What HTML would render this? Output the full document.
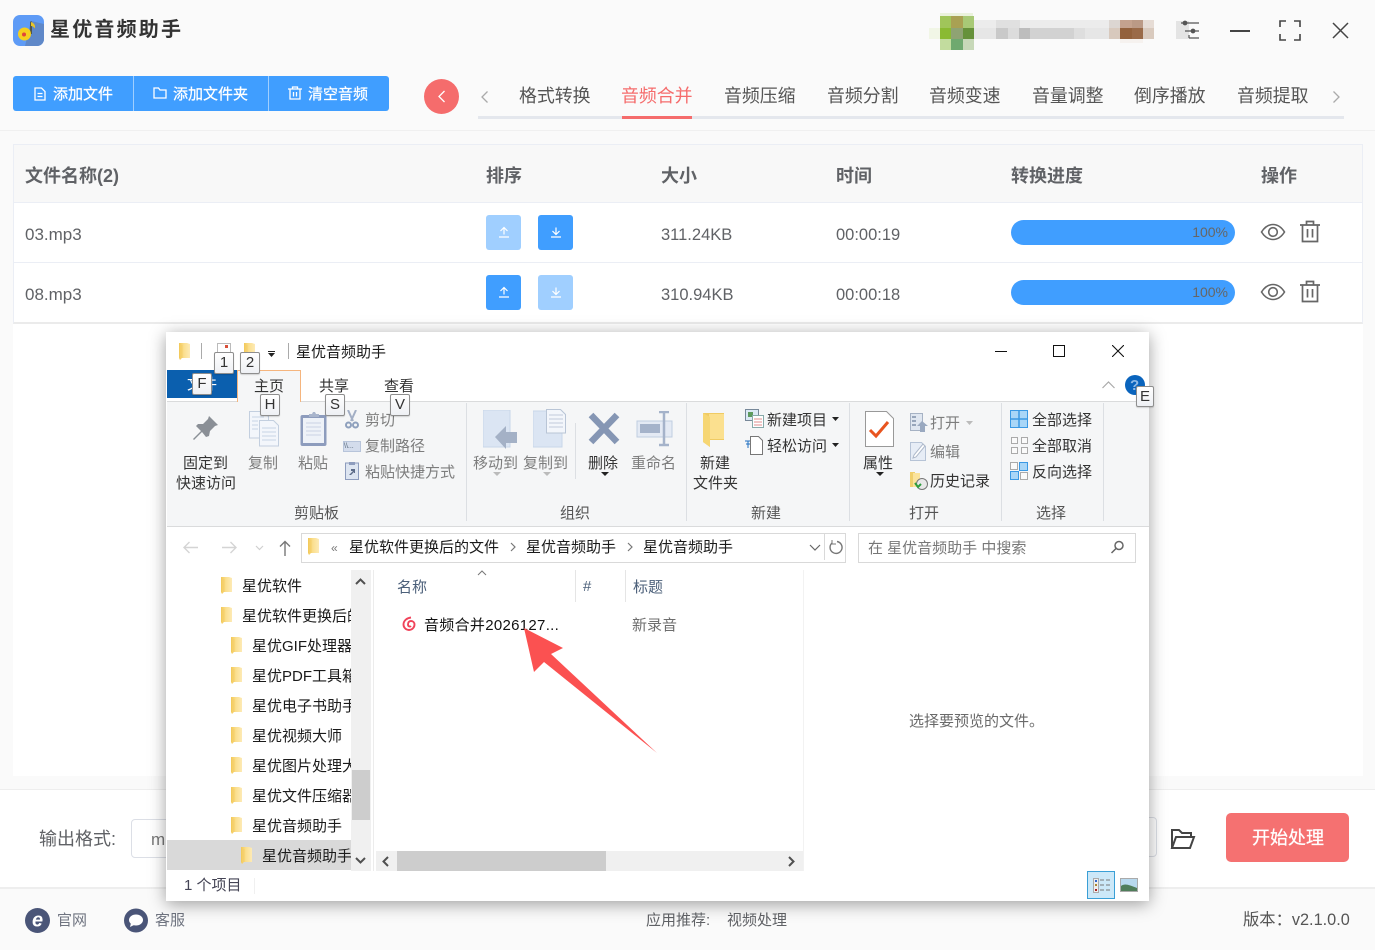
<!DOCTYPE html>
<html lang="zh"><head><meta charset="utf-8"><title>星优音频助手</title>
<style>
html,body{margin:0;padding:0;width:1375px;height:950px;overflow:hidden;background:#fafafa}
body{position:relative;font-family:"Liberation Sans","Noto Sans CJK SC",sans-serif;color:#606266}
.a{position:absolute}
.t{position:absolute;white-space:nowrap;line-height:20px}
.tab{font-size:17.900px;top:86px;color:#555;line-height:20px}
.th{font-size:18px;font-weight:700;top:166px;color:#606266}
.td{font-size:16.500px;color:#606266;margin-top:1px}
.w{-webkit-text-stroke:.25px #fff}
.btn{position:absolute;width:35px;height:35px;border-radius:3px;background:#409eff}
.btn.off{background:#a0cfff}
.bar{position:absolute;left:1011px;width:224px;height:25px;border-radius:13px;background:#409eff;color:#666;font-size:14px;line-height:25px;text-align:right}
.bar span{padding-right:7px}
.e{font-size:15px;color:#333;margin-top:1px}
.g{color:#7d7d7d}
.k{position:absolute;width:18px;height:20px;border:1px solid #8e8e8e;background:linear-gradient(#fff,#eef0f4);border-radius:2px;font-size:15px;line-height:20px;text-align:center;color:#333;z-index:5;box-shadow:0 1px 1px rgba(0,0,0,.15)}
.sep{position:absolute;width:1px;background:#dcdfe3}
.ng{font-size:15px;color:#555;top:504px}
.nav{font-size:15px;color:#1a1a1a;margin-top:1px}
.cl{overflow:hidden}
.fol{position:absolute;width:13px;height:17px}
</style></head><body>
<svg width="0" height="0" style="position:absolute"><defs>
<linearGradient id="fg" x1="0" x2="1" y1="0" y2="0"><stop offset="0" stop-color="#f2c857"/><stop offset=".45" stop-color="#fbdf8f"/><stop offset="1" stop-color="#fdeab5"/></linearGradient>
<symbol id="fo" viewBox="0 0 13 17"><path d="M1 0h8l3 1v14H4l-2 2-1-2z" fill="url(#fg)"/><path d="M4 2v13" stroke="#f0c452" stroke-width=".6" opacity=".6"/></symbol>
<symbol id="eye" viewBox="0 0 26 18"><path d="M1.500 9C5 3.500 9 1.500 13 1.500S21 3.500 24.500 9C21 14.500 17 16.500 13 16.500S5 14.500 1.500 9z" fill="none" stroke="#666" stroke-width="1.600"/><circle cx="13" cy="9" r="4.300" fill="none" stroke="#666" stroke-width="1.600"/></symbol>
<symbol id="del" viewBox="0 0 22 23"><path d="M1 5h20M7.500 5V1.500h7V5M3.500 5v16.500h15V5M8.500 9v8.500M13.500 9v8.500" fill="none" stroke="#666" stroke-width="1.700"/></symbol>
<symbol id="up" viewBox="0 0 12 12"><path d="M1 11h10M6 8.500V2M2.500 5L6 1.500 9.500 5" fill="none" stroke="#fff" stroke-width="1.200"/></symbol>
<symbol id="dn" viewBox="0 0 12 12"><path d="M1 11h10M6 1.500V8M2.500 5L6 8.500 9.500 5" fill="none" stroke="#fff" stroke-width="1.200"/></symbol>
</defs></svg>

<!-- header -->
<div class="a" style="left:0;top:130px;width:1375px;height:1px;background:#f0f0f0"></div>
<svg class="a" style="left:13px;top:15px" width="31" height="31" viewBox="0 0 31 31"><rect width="31" height="31" rx="7" fill="#5e9bf6"/><path d="M18 6l13 3v15a7 7 0 0 1-7 7H12z" fill="#5f88c8"/><path d="M18 6.500V19" stroke="#4a4a30" stroke-width="1.600"/><path d="M18 7c3 1 4.500 3 4 6.500-1-1.500-2.500-2.500-4-2.500z" fill="#e8c527"/><circle cx="11.500" cy="19" r="6.500" fill="#f5cf1e"/><circle cx="11" cy="19.500" r="2" fill="#e0453a"/></svg>
<div class="t" style="left:50px;top:20px;font-size:20px;font-weight:700;color:#333;letter-spacing:2.200px">星优音频助手</div>

<!-- blurred avatar -->
<svg class="a" style="left:929px;top:13px" width="226" height="38" shape-rendering="crispEdges">
<rect x="11" y="0" width="33" height="3" fill="#eaf2dc"/>
<rect x="11" y="3" width="11" height="12" fill="#a0c55a"/><rect x="22" y="3" width="12" height="12" fill="#a9a153"/><rect x="34" y="3" width="11" height="12" fill="#a8c976"/>
<rect x="0" y="15" width="11" height="11" fill="#f1f6e6"/><rect x="11" y="15" width="11" height="11" fill="#8aba32"/><rect x="22" y="15" width="12" height="11" fill="#8fa373"/><rect x="34" y="15" width="11" height="11" fill="#66913a"/>
<rect x="11" y="26" width="11" height="11" fill="#c2dc9e"/><rect x="22" y="26" width="12" height="11" fill="#6fa96f"/><rect x="34" y="26" width="11" height="11" fill="#c7d8b8"/>
<rect x="45" y="7" width="180" height="8" fill="#ececec"/><rect x="45" y="15" width="180" height="11" fill="#e6e6e6"/>
<rect x="67" y="15" width="12" height="11" fill="#c9c9c9"/><rect x="79" y="15" width="11" height="11" fill="#dcdcdc"/><rect x="90" y="15" width="11" height="11" fill="#bdbdbd"/><rect x="101" y="15" width="44" height="11" fill="#d2d2d2"/>
<rect x="145" y="15" width="11" height="11" fill="#dedede"/><rect x="67" y="7" width="24" height="8" fill="#e0e0e0"/><rect x="180" y="7" width="11" height="8" fill="#dcd6d2"/><rect x="180" y="15" width="11" height="11" fill="#d8c9bd"/>
<rect x="191" y="7" width="12" height="8" fill="#c4a28e"/><rect x="203" y="7" width="11" height="8" fill="#bb9a86"/><rect x="191" y="15" width="12" height="11" fill="#93613c"/><rect x="203" y="15" width="11" height="11" fill="#9a6a48"/><rect x="214" y="7" width="11" height="8" fill="#e6dcd5"/><rect x="214" y="15" width="11" height="11" fill="#d9cabe"/>
<rect x="191" y="26" width="23" height="4" fill="#f6f2ef"/>
</svg>
<div class="a" style="left:1176px;top:21px;width:13px;height:18px;background:#e4e4e4"></div>
<svg class="a" style="left:1180px;top:20px" width="20" height="20" fill="none" stroke="#555" stroke-width="1.200"><path d="M1 3h18M5 11h14M9 18h10M9 15v3"/><circle cx="5" cy="3" r="1.800" fill="#555"/><circle cx="13" cy="11" r="1.800" fill="#555"/></svg>
<div class="a" style="left:1230px;top:30px;width:20px;height:1.500px;background:#444"></div>
<svg class="a" style="left:1279px;top:20px" width="22" height="21" fill="none" stroke="#444" stroke-width="1.600"><path d="M7 1H1v6M15 1h6v6M1 14v6h6M21 14v6h-6"/></svg>
<svg class="a" style="left:1332px;top:22px" width="17" height="17" fill="none" stroke="#444" stroke-width="1.500"><path d="M1 1l15 15M16 1L1 16"/></svg>

<!-- toolbar -->
<div class="a" style="left:13px;top:76px;width:376px;height:35px;background:#409eff;border-radius:3px"></div>
<div class="a" style="left:133px;top:76px;width:1px;height:35px;background:#a0cfff"></div>
<div class="a" style="left:268px;top:76px;width:1px;height:35px;background:#a0cfff"></div>
<svg class="a" style="left:34px;top:87px" width="12" height="14" fill="none" stroke="#fff" stroke-width="1.300"><path d="M1 1h6.500L11 4.500V13H1zM3.500 6.500h5M3.500 9.500h5"/></svg>
<div class="t w" style="left:53px;top:85px;font-size:15px;color:#fff">添加文件</div>
<svg class="a" style="left:153px;top:87px" width="14" height="12" fill="none" stroke="#fff" stroke-width="1.300"><path d="M1 1h4.500l1.500 2h6v8H1z"/></svg>
<div class="t w" style="left:173px;top:85px;font-size:15px;color:#fff">添加文件夹</div>
<svg class="a" style="left:288px;top:86px" width="14" height="14" fill="none" stroke="#fff" stroke-width="1.300"><path d="M0 3h14M4.500 3V1h5v2M2 3v10h10V3M5.500 6v4.500M8.500 6v4.500"/></svg>
<div class="t w" style="left:308px;top:85px;font-size:15px;color:#fff">清空音频</div>

<!-- tabs -->
<div class="a" style="left:424px;top:79px;width:35px;height:35px;border-radius:50%;background:#f56c6c"></div>
<svg class="a" style="left:437px;top:90px" width="9" height="13" fill="none" stroke="#fff" stroke-width="1.300"><path d="M7.500 1L2 6.500 7.500 12"/></svg>
<svg class="a" style="left:480px;top:90px" width="9" height="14" fill="none" stroke="#aaa" stroke-width="1.300"><path d="M7.500 1.500L2 7l5.500 5.500"/></svg>
<div class="a" style="left:478px;top:116px;width:866px;height:3px;background:#e4e7ed"></div>
<div class="a" style="left:622px;top:116px;width:70px;height:3px;background:#f56c6c"></div>
<div class="t tab" style="left:519px">格式转换</div>
<div class="t tab" style="left:621px;color:#f56c6c">音频合并</div>
<div class="t tab" style="left:724px">音频压缩</div>
<div class="t tab" style="left:827px">音频分割</div>
<div class="t tab" style="left:929px">音频变速</div>
<div class="t tab" style="left:1032px">音量调整</div>
<div class="t tab" style="left:1134px">倒序播放</div>
<div class="t tab" style="left:1237px">音频提取</div>
<svg class="a" style="left:1332px;top:90px" width="9" height="14" fill="none" stroke="#aaa" stroke-width="1.300"><path d="M1.500 1.500L7 7l-5.500 5.500"/></svg>

<!-- table -->
<div class="a" style="left:13px;top:144px;width:1350px;height:632px;background:#fff"></div>
<div class="a" style="left:13px;top:144px;width:1348px;height:177px;border:1px solid #ebeef5;border-bottom:2px solid #ebebeb"></div>
<div class="a" style="left:14px;top:145px;width:1348px;height:57px;background:#f8f8f8"></div>
<div class="a" style="left:14px;top:202px;width:1348px;height:1px;background:#ebeef5"></div>
<div class="a" style="left:14px;top:262px;width:1348px;height:1px;background:#ebeef5"></div>
<div class="t th" style="left:25px">文件名称(2)</div>
<div class="t th" style="left:486px">排序</div>
<div class="t th" style="left:661px">大小</div>
<div class="t th" style="left:836px">时间</div>
<div class="t th" style="left:1011px">转换进度</div>
<div class="t th" style="left:1261px">操作</div>

<div class="t td" style="left:25px;top:224px;font-size:17px">03.mp3</div>
<div class="btn off" style="left:486px;top:215px"><svg class="a" style="left:12px;top:11px" width="12" height="12"><use href="#up"/></svg></div>
<div class="btn" style="left:538px;top:215px"><svg class="a" style="left:12px;top:11px" width="12" height="12"><use href="#dn"/></svg></div>
<div class="t td" style="left:661px;top:224px">311.24KB</div>
<div class="t td" style="left:836px;top:224px">00:00:19</div>
<div class="bar" style="top:220px"><span>100%</span></div>
<svg class="a" style="left:1260px;top:223px" width="26" height="18"><use href="#eye"/></svg>
<svg class="a" style="left:1299px;top:220px" width="22" height="23"><use href="#del"/></svg>

<div class="t td" style="left:25px;top:284px;font-size:17px">08.mp3</div>
<div class="btn" style="left:486px;top:275px"><svg class="a" style="left:12px;top:11px" width="12" height="12"><use href="#up"/></svg></div>
<div class="btn off" style="left:538px;top:275px"><svg class="a" style="left:12px;top:11px" width="12" height="12"><use href="#dn"/></svg></div>
<div class="t td" style="left:661px;top:284px">310.94KB</div>
<div class="t td" style="left:836px;top:284px">00:00:18</div>
<div class="bar" style="top:280px"><span>100%</span></div>
<svg class="a" style="left:1260px;top:283px" width="26" height="18"><use href="#eye"/></svg>
<svg class="a" style="left:1299px;top:280px" width="22" height="23"><use href="#del"/></svg>

<!-- bottom panel -->
<div class="a" style="left:0;top:789px;width:1375px;height:100px;background:#fff;border-top:1px solid #eee;border-bottom:2px solid #eee;box-sizing:border-box"></div>
<div class="t" style="left:39px;top:829px;font-size:18px;color:#606266">输出格式:</div>
<div class="a" style="left:131px;top:819px;width:60px;height:37px;border:1px solid #dcdfe6;border-radius:4px;background:#fff"></div>
<div class="t" style="left:151px;top:830px;font-size:17px;color:#777">mp3</div>
<div class="a" style="left:1100px;top:817px;width:55px;height:38px;border:1px solid #dcdfe6;border-radius:4px;background:#fff"></div>
<svg class="a" style="left:1170px;top:827px" width="26" height="23" fill="none" stroke="#444" stroke-width="2"><path d="M2 21V3h7l3 3h9v4M2 21l4-11h18l-4 11z"/></svg>
<div class="a" style="left:1226px;top:813px;width:123px;height:49px;background:#f56c6c;opacity:.97;border-radius:5px"></div>
<div class="t w" style="left:1252px;top:828px;font-size:18px;color:#fff">开始处理</div>

<!-- footer -->
<svg class="a" style="left:25px;top:908px" width="25" height="25"><circle cx="12.500" cy="12.500" r="12.500" fill="#4a5578"/><text x="12.500" y="18.500" font-family="Liberation Sans" font-size="20" font-weight="700" font-style="italic" text-anchor="middle" fill="#fff">e</text></svg>
<div class="t" style="left:57px;top:911px;font-size:15px;color:#6f7480">官网</div>
<svg class="a" style="left:124px;top:908px" width="24" height="25"><circle cx="12" cy="12.500" r="12" fill="#4a5578"/><ellipse cx="12" cy="12" rx="7" ry="5.500" fill="#fff"/><path d="M7 15l-1 4 5-2.500z" fill="#fff"/></svg>
<div class="t" style="left:155px;top:911px;font-size:15px;color:#6f7480">客服</div>
<div class="t" style="left:646px;top:911px;font-size:15px;color:#606266">应用推荐:</div>
<div class="t" style="left:727px;top:911px;font-size:15px;color:#606266">视频处理</div>
<div class="t" style="left:1243px;top:910px;font-size:16.300px;color:#555;margin-top:0">版本：v2.1.0.0</div>

<!-- explorer window -->
<div class="a" style="left:166px;top:332px;width:983px;height:569px;background:#fff;box-shadow:0 3px 16px rgba(0,0,0,.38);z-index:2" id="w">
<div style="position:absolute;left:-166px;top:-332px;width:1375px;height:950px">
<svg class="fol" style="left:178px;top:343px"><use href="#fo"/></svg>
<div class="a" style="left:201px;top:343px;width:1px;height:16px;background:#aaa"></div>
<div class="a" style="left:217px;top:343px;width:14px;height:16px;background:#fff;border:1px solid #bbb;box-sizing:border-box"></div>
<div class="a" style="left:225px;top:345px;width:3px;height:3px;background:#d9503a"></div>
<svg class="fol" style="left:243px;top:343px"><use href="#fo"/></svg>
<svg class="a" style="left:268px;top:351px" width="8" height="6"><path d="M0 2h7L3.500 6zM0 0h7v1H0z" fill="#222"/></svg>
<div class="a" style="left:288px;top:343px;width:1px;height:16px;background:#aaa"></div>
<div class="t" style="left:296px;top:343px;font-size:15px;color:#1a1a1a">星优音频助手</div>
<div class="a" style="left:995px;top:351px;width:12px;height:1px;background:#111"></div>
<div class="a" style="left:1053px;top:345px;width:10px;height:10px;border:1.500px solid #111"></div>
<svg class="a" style="left:1112px;top:345px" width="12" height="12" fill="none" stroke="#111" stroke-width="1.100"><path d="M0 0l12 12M12 0L0 12"/></svg>

<div class="k" style="left:214px;top:352px">1</div>
<div class="k" style="left:240px;top:352px">2</div>

<div class="a" style="left:167px;top:370px;width:70px;height:28px;background:#0b5fae"></div>
<div class="t" style="left:187px;top:375px;font-size:15px;color:#fff">文件</div>
<div class="k" style="left:192px;top:373px">F</div>
<div class="a" style="left:167px;top:401px;width:982px;background:#f5f6f7;border-top:1px solid #dadbdc;border-bottom:1px solid #dadbdc;box-sizing:border-box;height:126px"></div>
<div class="a" style="left:237px;top:370px;width:64px;height:32px;background:#f5f6f7;border:1px solid #f5b57e;border-bottom:none;box-sizing:border-box"></div>
<div class="t e" style="left:254px;top:376px">主页</div>
<div class="t e" style="left:319px;top:376px">共享</div>
<div class="t e" style="left:384px;top:376px">查看</div>
<div class="k" style="left:260px;top:394px">H</div>
<div class="k" style="left:325px;top:394px">S</div>
<div class="k" style="left:390px;top:394px">V</div>
<svg class="a" style="left:1102px;top:381px" width="13" height="8" fill="none" stroke="#aaa" stroke-width="1.200"><path d="M0.500 7L6.500 1l6 6"/></svg>
<div class="a" style="left:1125px;top:375px;width:20px;height:20px;border-radius:50%;background:#0a64bd"></div>
<div class="t" style="left:1130px;top:376px;font-size:15px;font-weight:700;color:#8fb9e6">?</div>
<div class="k" style="left:1136px;top:386px;width:16px;height:19px;line-height:19px">E</div>

<!-- ribbon separators -->
<div class="sep" style="left:466px;top:403px;height:118px"></div>
<div class="sep" style="left:686px;top:403px;height:118px"></div>
<div class="sep" style="left:849px;top:403px;height:118px"></div>
<div class="sep" style="left:1001px;top:403px;height:118px"></div>
<div class="sep" style="left:1103px;top:403px;height:118px"></div>
<div class="sep" style="left:575px;top:423px;height:56px"></div>

<!-- clipboard -->
<svg class="a" style="left:192px;top:415px" width="28" height="28"><path d="M17 1l9 9-3 1-5 5-1 5-3 1-4-5-8 8-1-1 8-8-5-5 2-2 5 0 5-5z" fill="#8a8f96"/></svg>
<div class="t e" style="left:183px;top:453px">固定到</div>
<div class="t e" style="left:176px;top:473px">快速访问</div>
<svg class="a" style="left:248px;top:411px" width="32" height="36" fill="#f3f6fb" stroke="#c3cfdf"><path d="M1.500.5h14l5 5V27H1.500z"/><path d="M11.500 9.500h14l5 5V35H11.500z"/><path d="M4 6h12M4 10h6M4 14h6M4 18h6M14 17h14M14 21h14M14 25h14M14 29h14" stroke="#c7d4e5"/></svg>
<div class="t e g" style="left:248px;top:453px">复制</div>
<svg class="a" style="left:300px;top:411px" width="28" height="36"><rect x="0.500" y="4" width="26" height="31" rx="2" fill="#8d9cbd"/><rect x="3" y="7" width="21" height="25" fill="#eef2f8"/><path d="M6 12h15M6 16h15M6 20h15M6 24h15" stroke="#c9d3e4"/><path d="M9 6V3h3l1-2h2l1 2h3v3z" fill="#a9b5cc"/></svg>
<div class="t e g" style="left:298px;top:453px">粘贴</div>
<svg class="a" style="left:345px;top:410px" width="14" height="19" fill="none" stroke="#a3afc5" stroke-width="2"><path d="M3 0l5 11M11 0L6 11"/><circle cx="3.500" cy="15" r="2.500" stroke="#8ea0bd"/><circle cx="10.500" cy="15" r="2.500" stroke="#8ea0bd"/></svg>
<div class="t e g" style="left:365px;top:410px">剪切</div>
<div class="a" style="left:343px;top:441px;width:16px;height:9px;background:#d3dcec;border:1px solid #b7c4da;font-size:7px;line-height:9px;color:#567;overflow:hidden">\\...</div>
<div class="t e g" style="left:365px;top:436px">复制路径</div>
<svg class="a" style="left:345px;top:461px" width="14" height="19"><rect x="0.500" y="2" width="13" height="16.500" fill="#dde5f1" stroke="#8d9cbd"/><path d="M4 1h6v3H4z" fill="#8d9cbd"/><path d="M4 14l4-4H6V8h4v4H9V11l-3 3z" fill="#5c6b88"/></svg>
<div class="t e g" style="left:365px;top:462px">粘贴快捷方式</div>
<div class="t ng" style="left:294px">剪贴板</div>

<!-- organize -->
<svg class="a" style="left:483px;top:410px" width="34" height="39"><rect width="27" height="37" fill="#dbe5f3" stroke="#c8d6e8"/><path d="M12 29l11-11v6h11v11H23v6z" fill="#a4b1c6" transform="translate(0,-2)"/></svg>
<div class="t e g" style="left:473px;top:453px">移动到</div>
<svg class="a" style="left:533px;top:409px" width="34" height="39"><rect y="2" width="29" height="36" fill="#dbe5f3" stroke="#c8d6e8"/><path d="M13.500.5h14l5 5V24h-19z" fill="#f3f6fb" stroke="#b9c5d6"/><path d="M16 6h14M16 10h14M16 14h14M16 18h14" stroke="#c0cbdb"/></svg>
<div class="t e g" style="left:523px;top:453px">复制到</div>
<svg class="a" style="left:493px;top:472px" width="8" height="5"><path d="M0 0h8L4 4z" fill="#bbb"/></svg>
<svg class="a" style="left:543px;top:472px" width="8" height="5"><path d="M0 0h8L4 4z" fill="#bbb"/></svg>
<svg class="a" style="left:588px;top:412px" width="32" height="33"><path d="M3 3l26 27M29 3L3 30" stroke="#8596b4" stroke-width="6.500"/></svg>
<div class="t e" style="left:588px;top:453px">删除</div>
<svg class="a" style="left:601px;top:472px" width="8" height="5"><path d="M0 0h8L4 4z" fill="#222"/></svg>
<svg class="a" style="left:636px;top:411px" width="37" height="36"><rect x="1" y="10" width="35" height="16" fill="#e4eaf4" stroke="#c0cde0"/><rect x="4" y="13" width="20" height="9" fill="#a5b3ca"/><path d="M28 1v33M23 1h10M23 34h10" stroke="#a5b3ca" stroke-width="2.500"/></svg>
<div class="t e g" style="left:631px;top:453px">重命名</div>
<div class="t ng" style="left:560px">组织</div>

<!-- new -->
<svg class="a" style="left:702px;top:412px" width="25" height="36"><path d="M1 1h21v27H8v7L1 30z" fill="#f0cb63"/><path d="M7 2h15v25H8z" fill="#fbe08f"/><path d="M1 1l7 4v30l-7-5z" fill="#f6d673"/></svg>
<div class="t e" style="left:700px;top:453px">新建</div>
<div class="t e" style="left:693px;top:473px">文件夹</div>
<svg class="a" style="left:745px;top:409px" width="19" height="19"><rect x="0.500" y="0.500" width="13" height="11" fill="#dbe9f5" stroke="#789"/><rect x="3" y="3" width="5" height="5" fill="#5d9a5e"/><rect x="7.500" y="6.500" width="11" height="12" fill="#fff" stroke="#8aa"/><path d="M9 10h8M9 13h8M9 16h8" stroke="#e28c8c"/></svg>
<div class="t e" style="left:767px;top:410px">新建项目</div>
<svg class="a" style="left:832px;top:417px" width="7" height="4"><path d="M0 0h7L3.500 4z" fill="#222"/></svg>
<svg class="a" style="left:745px;top:436px" width="18" height="19" fill="none"><path d="M5.500.5h8l4 4V18.500h-12z" fill="#fff" stroke="#777"/><path d="M0 5h5M1 8h4M3 5v7" stroke="#1f6fc0"/></svg>
<div class="t e" style="left:767px;top:436px">轻松访问</div>
<svg class="a" style="left:832px;top:443px" width="7" height="4"><path d="M0 0h7L3.500 4z" fill="#222"/></svg>
<div class="t ng" style="left:751px">新建</div>

<!-- open -->
<svg class="a" style="left:865px;top:411px" width="29" height="36"><path d="M.5.500h21l7 7V35.500H.5z" fill="#fff" stroke="#999"/><path d="M5 19l6 6 12-14" fill="none" stroke="#e8541f" stroke-width="3"/></svg>
<div class="t e" style="left:863px;top:453px">属性</div>
<svg class="a" style="left:876px;top:472px" width="8" height="5"><path d="M0 0h8L4 4z" fill="#222"/></svg>
<svg class="a" style="left:910px;top:413px" width="18" height="19"><rect x="0.500" y="0.500" width="12" height="17" fill="#dfe6f0" stroke="#a6b2c4"/><path d="M2 3h4v2H2zM2 7h4v2H2zM2 11h4v2H2z" fill="#97a5ba"/><path d="M12 8l6 5h-3v6h-5v-6H7z" fill="#9aa9c0"/></svg>
<div class="t e g" style="left:930px;top:413px">打开</div>
<svg class="a" style="left:966px;top:421px" width="7" height="4"><path d="M0 0h7L3.500 4z" fill="#bbb"/></svg>
<svg class="a" style="left:910px;top:442px" width="17" height="19"><path d="M.5.500h11l4 4V18.500H.5z" fill="#e7edf6" stroke="#b6c3d6"/><path d="M3 16l3-1 9-11-2-2-9 11z" fill="#fff" stroke="#aeb9ca"/></svg>
<div class="t e g" style="left:930px;top:442px">编辑</div>
<svg class="a" style="left:910px;top:471px" width="18" height="19"><path d="M0 1h5v15H0z" fill="#f0cf6c"/><path d="M3 2h7v14H3z" fill="#fbe39b"/><circle cx="12" cy="13" r="5.500" fill="#e9e9e9" stroke="#777"/><path d="M5 12l3 4 3-3" fill="none" stroke="#2f9e3f" stroke-width="2"/></svg>
<div class="t e" style="left:930px;top:471px">历史记录</div>
<div class="t ng" style="left:909px">打开</div>

<!-- select -->
<svg class="a" style="left:1010px;top:410px" width="18" height="18"><rect x=".5" y=".5" width="17" height="17" fill="#a9d6f7" stroke="#3b99e4"/><path d="M9 0v18M0 9h18" stroke="#3b99e4" stroke-width="1.500"/></svg>
<div class="t e" style="left:1032px;top:410px">全部选择</div>
<svg class="a" style="left:1011px;top:437px" width="17" height="17" fill="#fafafa" stroke="#aaa"><rect x=".5" y=".5" width="6" height="6"/><rect x="10.500" y=".5" width="6" height="6"/><rect x=".5" y="10.500" width="6" height="6"/><rect x="10.500" y="10.500" width="6" height="6"/></svg>
<div class="t e" style="left:1032px;top:436px">全部取消</div>
<svg class="a" style="left:1010px;top:462px" width="18" height="18"><g fill="#fafafa" stroke="#aaa"><rect x=".5" y=".5" width="7" height="7"/><rect x="10.500" y="10.500" width="7" height="7"/></g><g fill="#a9d6f7" stroke="#3b99e4"><rect x="9.500" y=".5" width="8" height="8"/><rect x=".5" y="9.500" width="8" height="8"/></g></svg>
<div class="t e" style="left:1032px;top:462px">反向选择</div>
<div class="t ng" style="left:1036px">选择</div>

<!-- address -->
<svg class="a" style="left:183px;top:541px" width="16" height="13" fill="none" stroke="#d4d4d4" stroke-width="1.400"><path d="M15 6.500H1M6.500 1L1 6.500 6.500 12"/></svg>
<svg class="a" style="left:222px;top:541px" width="16" height="13" fill="none" stroke="#d4d4d4" stroke-width="1.400"><path d="M0 6.500h14M8.500 1L14 6.500 8.500 12"/></svg>
<svg class="a" style="left:255px;top:545px" width="9" height="6" fill="none" stroke="#d0d0d0" stroke-width="1.200"><path d="M1 1l3.500 3.500L8 1"/></svg>
<svg class="a" style="left:279px;top:540px" width="12" height="16" fill="none" stroke="#777" stroke-width="1.400"><path d="M6 16V1.500M1 6.500l5-5 5 5"/></svg>
<div class="a" style="left:301px;top:533px;width:543px;height:28px;border:1px solid #d9d9d9;background:#fff"></div>
<svg class="fol" style="left:307px;top:538px"><use href="#fo"/></svg>
<div class="t" style="left:331px;top:538px;font-size:12px;color:#777">«</div>
<div class="t nav" style="left:349px;top:537px">星优软件更换后的文件</div>
<svg class="a" style="left:510px;top:542px" width="6" height="10" fill="none" stroke="#777" stroke-width="1.200"><path d="M1 1l4 4-4 4"/></svg>
<div class="t nav" style="left:526px;top:537px">星优音频助手</div>
<svg class="a" style="left:627px;top:542px" width="6" height="10" fill="none" stroke="#777" stroke-width="1.200"><path d="M1 1l4 4-4 4"/></svg>
<div class="t nav" style="left:643px;top:537px">星优音频助手</div>
<svg class="a" style="left:809px;top:544px" width="12" height="8" fill="none" stroke="#666" stroke-width="1.200"><path d="M1 1l5 5 5-5"/></svg>
<div class="a" style="left:824px;top:534px;width:1px;height:26px;background:#d9d9d9"></div>
<svg class="a" style="left:828px;top:539px" width="16" height="16" fill="none" stroke="#777" stroke-width="1.400"><path d="M9 2.500A6 6 0 1 1 4 4"/><path d="M4 1v4h4" stroke-width="1"/></svg>
<div class="a" style="left:858px;top:533px;width:276px;height:28px;border:1px solid #d9d9d9;background:#fff"></div>
<div class="t" style="left:868px;top:539px;font-size:15px;color:#777">在 星优音频助手 中搜索</div>
<svg class="a" style="left:1110px;top:540px" width="15" height="15" fill="none" stroke="#666" stroke-width="1.500"><circle cx="9" cy="5.500" r="4"/><path d="M6 8.500L1.500 13"/></svg>

<!-- nav tree -->
<svg class="fol" style="left:220px;top:577px"><use href="#fo"/></svg><div class="t nav cl" style="left:242px;top:576px;width:109px">星优软件</div>
<svg class="fol" style="left:220px;top:607px"><use href="#fo"/></svg><div class="t nav cl" style="left:242px;top:606px;width:109px">星优软件更换后的文件</div>
<svg class="fol" style="left:230px;top:637px"><use href="#fo"/></svg><div class="t nav cl" style="left:252px;top:636px;width:99px">星优GIF处理器</div>
<svg class="fol" style="left:230px;top:667px"><use href="#fo"/></svg><div class="t nav cl" style="left:252px;top:666px;width:99px">星优PDF工具箱</div>
<svg class="fol" style="left:230px;top:697px"><use href="#fo"/></svg><div class="t nav cl" style="left:252px;top:696px;width:99px">星优电子书助手</div>
<svg class="fol" style="left:230px;top:727px"><use href="#fo"/></svg><div class="t nav cl" style="left:252px;top:726px;width:99px">星优视频大师</div>
<svg class="fol" style="left:230px;top:757px"><use href="#fo"/></svg><div class="t nav cl" style="left:252px;top:756px;width:99px">星优图片处理大师</div>
<svg class="fol" style="left:230px;top:787px"><use href="#fo"/></svg><div class="t nav cl" style="left:252px;top:786px;width:99px">星优文件压缩器</div>
<svg class="fol" style="left:230px;top:817px"><use href="#fo"/></svg><div class="t nav cl" style="left:252px;top:816px;width:99px">星优音频助手</div>
<div class="a" style="left:167px;top:840px;width:184px;height:30px;background:#d9d9d9"></div>
<svg class="fol" style="left:240px;top:847px"><use href="#fo"/></svg><div class="t nav cl" style="left:262px;top:846px;width:89px">星优音频助手</div>
<!-- tree scrollbar -->
<div class="a" style="left:351px;top:570px;width:20px;height:301px;background:#f0f0f0"></div>
<div class="a" style="left:352px;top:770px;width:18px;height:50px;background:#cdcdcd"></div>
<svg class="a" style="left:355px;top:578px" width="11" height="7" fill="none" stroke="#505050" stroke-width="2"><path d="M1 6l4.500-4.500L10 6"/></svg>
<svg class="a" style="left:355px;top:857px" width="11" height="7" fill="none" stroke="#505050" stroke-width="2"><path d="M1 1l4.500 4.500L10 1"/></svg>
<div class="a" style="left:373px;top:570px;width:1px;height:301px;background:#ececec"></div>

<!-- list -->
<svg class="a" style="left:477px;top:570px" width="10" height="6" fill="none" stroke="#777"><path d="M1 5l4-4 4 4"/></svg>
<div class="t" style="left:397px;top:578px;font-size:15px;color:#4c607a">名称</div>
<div class="a" style="left:575px;top:570px;width:1px;height:32px;background:#e5e5e5"></div>
<div class="t" style="left:583px;top:577px;font-size:15px;color:#4c607a">#</div>
<div class="a" style="left:625px;top:570px;width:1px;height:32px;background:#e5e5e5"></div>
<div class="t" style="left:633px;top:578px;font-size:15px;color:#4c607a">标题</div>
<svg class="a" style="left:402px;top:616px" width="14" height="15" fill="none" stroke="#f0435a" stroke-width="1.900"><path d="M9 1.500C5 2 1.500 4.500 1.500 8.500a5.500 5.500 0 0 0 11 0c0-2-1.500-3.500-3.500-3.500S6 6.500 6 8.500s2 2.500 3 1.500"/></svg>
<div class="t" style="left:424px;top:616px;font-size:15px;color:#111;letter-spacing:.3px">音频合并2026127...</div>
<div class="t" style="left:632px;top:616px;font-size:15px;color:#6e6e6e">新录音</div>
<!-- h scrollbar -->
<div class="a" style="left:376px;top:851px;width:427px;height:20px;background:#f0f0f0"></div>
<div class="a" style="left:397px;top:851px;width:209px;height:20px;background:#cdcdcd"></div>
<svg class="a" style="left:382px;top:856px" width="7" height="11" fill="none" stroke="#505050" stroke-width="2"><path d="M6 1L1.500 5.500 6 10"/></svg>
<svg class="a" style="left:788px;top:856px" width="7" height="11" fill="none" stroke="#505050" stroke-width="2"><path d="M1 1l4.500 4.500L1 10"/></svg>
<div class="a" style="left:803px;top:570px;width:1px;height:301px;background:#f2f2f2"></div>
<div class="t" style="left:909px;top:712px;font-size:15px;color:#6a6a6a">选择要预览的文件。</div>
<!-- arrow -->
<svg class="a" style="left:515px;top:620px;z-index:3" width="150" height="140"><path d="M9 8L48 28 36 34 142 133 29 42 19 52z" fill="#fb5151"/></svg>
<!-- status -->
<div class="t" style="left:184px;top:876px;font-size:15px;color:#445">1 个项目</div>
<div class="a" style="left:254px;top:878px;width:1px;height:16px;background:#f0f0f0"></div>
<div class="a" style="left:1087px;top:871px;width:28px;height:28px;background:#cce8f8;border:1px solid #3a9fd6;box-sizing:border-box"></div>
<svg class="a" style="left:1093px;top:878px" width="18" height="15"><rect x=".5" y=".5" width="5" height="14" fill="#eee" stroke="#aaa"/><path d="M2 2h2v2H2z" fill="#36c"/><path d="M2 6h2v2H2z" fill="#a83"/><path d="M2 11h2v2H2z" fill="#a22"/><path d="M7 2h4M13 2h4M7 7h4M13 7h4M7 12h4M13 12h4" stroke="#777"/></svg>
<svg class="a" style="left:1120px;top:878px" width="18" height="14"><rect x=".5" y=".5" width="17" height="13" fill="#b8d9ee" stroke="#aaa"/><path d="M1 8c4-3 8-1 16 2v3H1z" fill="#4f7d5a"/></svg>
</div></div>
</body></html>
